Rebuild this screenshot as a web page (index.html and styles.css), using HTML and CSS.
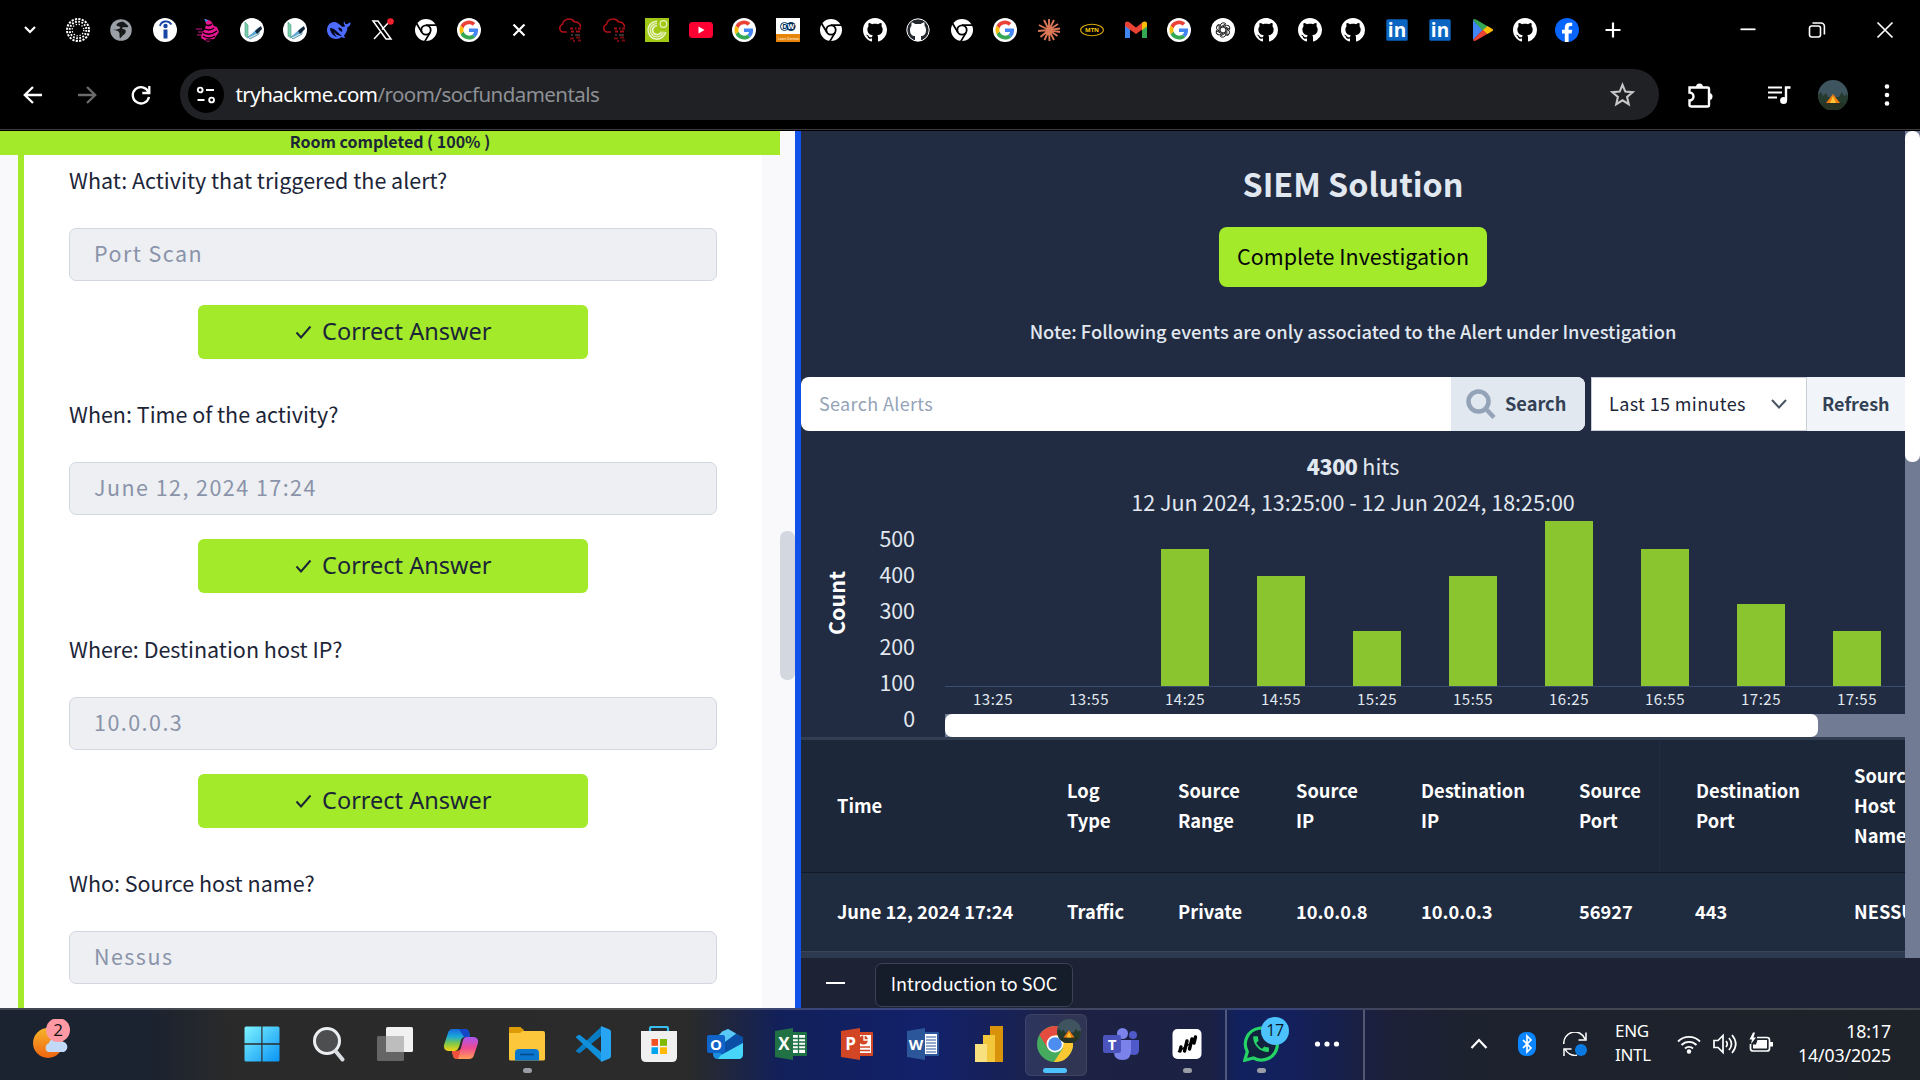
FILE: index.html
```html
<!DOCTYPE html>
<html lang="en">
<head>
<meta charset="utf-8">
<title>SOC Fundamentals</title>
<link rel="stylesheet" href="styles.css">
</head>
<body>
<svg class="defs" aria-hidden="true">
  <symbol id="google" viewBox="0 0 48 48"><circle cx="24" cy="24" r="24" fill="#fff"/><g transform="translate(5 5) scale(.79)"><path fill="#EA4335" d="M24 9.5c3.54 0 6.71 1.22 9.21 3.6l6.85-6.85C35.9 2.38 30.47 0 24 0 14.62 0 6.51 5.38 2.56 13.22l7.98 6.19C12.43 13.72 17.74 9.5 24 9.5z"/><path fill="#4285F4" d="M46.98 24.55c0-1.57-.15-3.09-.38-4.55H24v9.02h12.94c-.58 2.96-2.26 5.48-4.78 7.18l7.73 6c4.51-4.18 7.09-10.36 7.09-17.65z"/><path fill="#FBBC05" d="M10.53 28.59c-.48-1.45-.76-2.99-.76-4.59s.27-3.14.76-4.59l-7.98-6.19C.92 16.46 0 20.12 0 24c0 3.88.92 7.54 2.56 10.78l7.97-6.19z"/><path fill="#34A853" d="M24 48c6.48 0 11.93-2.13 15.89-5.81l-7.73-6c-2.15 1.45-4.92 2.3-8.16 2.3-6.26 0-11.57-4.22-13.47-9.91l-7.98 6.19C6.51 42.62 14.62 48 24 48z"/></g></symbol>
  <symbol id="github" viewBox="0 0 16 16"><path fill="#fff" d="M8 0C3.58 0 0 3.58 0 8c0 3.54 2.29 6.53 5.47 7.59.4.07.55-.17.55-.38 0-.19-.01-.82-.01-1.49-2.01.37-2.53-.49-2.69-.94-.09-.23-.48-.94-.82-1.13-.28-.15-.68-.52-.01-.53.63-.01 1.08.58 1.23.82.72 1.21 1.87.87 2.33.66.07-.52.28-.87.51-1.07-1.78-.2-3.64-.89-3.64-3.95 0-.87.31-1.59.82-2.15-.08-.2-.36-1.02.08-2.12 0 0 .67-.21 2.2.82.64-.18 1.32-.27 2-.27s1.36.09 2 .27c1.53-1.04 2.2-.82 2.2-.82.44 1.1.16 1.92.08 2.12.51.56.82 1.27.82 2.15 0 3.07-1.87 3.75-3.65 3.95.29.25.54.73.54 1.48 0 1.07-.01 1.93-.01 2.2 0 .21.15.46.55.38A8.01 8.01 0 0 0 16 8c0-4.42-3.58-8-8-8z"/></symbol>
  <symbol id="chromemono" viewBox="0 0 24 24"><circle cx="12" cy="12" r="11" fill="#fff"/><circle cx="12" cy="12" r="5.6" fill="#000"/><circle cx="12" cy="12" r="3.8" fill="#fff"/><path d="M12 7.2h10.6M7.9 14.4L2.4 5.2M16.2 14.4l-5.4 9" stroke="#000" stroke-width="1.8" fill="none"/></symbol>
  <symbol id="linkedin" viewBox="0 0 24 24"><rect x="1.3" y="1.3" width="21.4" height="21.4" rx="1.5" fill="#0a66c2"/><text x="12" y="18.6" text-anchor="middle" class="glyph" font-size="19" fill="#fff">in</text></symbol>
  <symbol id="read" viewBox="0 0 24 24"><circle cx="12" cy="12" r="12" fill="#fff"/><path d="M5 4v14l3 2V7z" fill="#7ecfa8" stroke="#3b9a8c" stroke-width=".6"/><path d="M8 19l11-7v4l-9 5z" fill="#cfe9d8" stroke="#3b82b0" stroke-width=".8"/><path d="M9 18L19 9l3 1-4 5-8 4z" fill="#5fa8d8"/><path d="M15 13l6-5 1 3-5 5z" fill="#142536"/></symbol>
  <symbol id="thm" viewBox="0 0 24 24"><path d="M9 14H4.500a4 4 0 0 1 0-7.600A6.500 6 0 0 1 16.500 4a5 5 0 0 1 6 5" stroke="#b01116" stroke-width="1.5" fill="none"/><path d="M12 10.500h3M17 10.500h1.500M20 10.500h3M13 13.500h3M18 13.500h4" stroke="#a01015" stroke-width="2" fill="none"/><path d="M13 17h2M17 17h5" stroke="#333" stroke-width="2"/><path d="M12 20.500h4M18 19.500h4M15 23h2M20 22.500h3" stroke="#780b10" stroke-width="1.800"/></symbol>
  <symbol id="camp" viewBox="0 0 30 30"><circle cx="15" cy="15" r="15" fill="#3e5560"/><path d="M0 15l3-3 2 4 3-3 2 4h11l3-5 2 4 3-2 1 4A15 15 0 0 1 .3 18z" fill="#243b2e"/><path d="M3 24a15 15 0 0 0 24 0c-4-3-20-3-24 0z" fill="#263223"/><path d="M15 14l-7 9h14z" fill="#f07b12"/><path d="M15 16l-3 7h6z" fill="#ffc531"/></symbol>
</svg>

<header class="browser">
  <div class="tabs">
    <svg class="chev" viewBox="0 0 24 24"><path d="M7 9l5 5 5-5" class="line w2"/></svg>
    <div class="favs first">
      <svg viewBox="0 0 24 24"><g fill="none" stroke="#fff"><circle cx="12" cy="12" r="11" stroke-width="2" stroke-dasharray="2.200 1.256"/><circle cx="12" cy="12" r="8.300" stroke-width="1.900" stroke-dasharray="1.800 1.459"/><circle cx="12" cy="12" r="5.800" stroke-width="1.300" stroke-dasharray="1.300 1.737"/></g></svg>
      <svg viewBox="0 0 24 24"><circle cx="12" cy="12" r="10.800" fill="#9aa0a6"/><path d="M14 3.500c-3 .5-6.500 1.500-6.500 3.500 0 1.500 2.500 1 3.500 2s-1 2-3 2.500l-5 .5c2 0 5 0 6.500 1.500s1 3 1 5l.5 2c1-1 2-2.500 4-4s2.500-4.500.5-5-3-1-2-2 4 .5 5.500-.5S16 5 14 3.500z" fill="#17191b"/></svg>
      <svg viewBox="0 0 24 24"><circle cx="12" cy="12" r="12" fill="#fff"/><circle cx="12.500" cy="8" r="2.200" fill="#1846a5"/><path d="M10.500 11.500h4v9h-4z" fill="#1846a5"/><path d="M7 8c1-5 8-6.500 11.500-1.500" fill="none" stroke="#1846a5" stroke-width="1.800"/></svg>
      <svg viewBox="0 0 24 24"><path d="M9 1l6 2 3 5 3 1 2 5-5 7-6 3-7-4 1-5 3-4 1-5z" fill="#e5168f"/><path d="M8 6q5 3 8 0M7 10q6 4 11 0M6 14q7 5 15-1M7 18q6 4 12 0M10 22h7" stroke="#000" stroke-width="1.300" fill="none"/><path d="M0 11h6M2 14h5M1 17h5" stroke="#d0148a"/><path d="M8 1l4 1-2 2z" fill="#1da1f2"/></svg>
      <svg><use href="#read"/></svg>
      <svg><use href="#read"/></svg>
      <svg viewBox="0 0 24 24"><path fill="#4d6bfe" d="M23.700 4.500c-2-.2-2 1.500-4 1.700-2 0-2.500-3.500-2.500-3.500-1 2-.5 4 1 5-.7 1-1.500 1.200-3 1C13 7 11 4.500 8 4 3 3.500 0 8 0 12c0 5 4 9 9 9 3 0 4-1 5.500-2 1.500 1 3 1 4 .5-1-.7-1.500-1.500-1.500-2 2.500-2.500 3.500-6 3.500-8.500 2-.5 3-2 3.200-4.500z"/><path d="M3 10c5 0 8 5 12 8-5 0-7-3-8-4 1 3 2 4 3 5-4-1-7-5-7-9zM11 10c3-1 5 2 4 4-2-1-3-2-4-4z" fill="#05081a"/></svg>
      <svg viewBox="0 0 24 24"><path d="M3 3h5l13 18h-5z" class="line" stroke-width="1.500"/><path d="M20 3l-8 8.500M11 13.500L4 21" class="line" stroke-width="1.500"/><circle cx="20.500" cy="3.500" r="3.300" fill="#f4212e"/></svg>
      <svg><use href="#chromemono"/></svg>
      <svg><use href="#google"/></svg>
    </div>
    <svg class="tabclose" viewBox="0 0 24 24"><path d="M6.500 6.500l11 11M17.500 6.500l-11 11" class="line w2"/></svg>
    <div class="favs open">
      <svg><use href="#thm"/></svg>
      <svg><use href="#thm"/></svg>
      <svg viewBox="0 0 24 24"><rect width="24" height="24" fill="#a0c814"/><path d="M12 2.500a9.700 9.700 0 1 0 9.500 11.500l-6-.5a3.600 3.600 0 1 1-3.500-5z" fill="#e9f2c0"/><path d="M12 4.500a7.700 7.700 0 1 0 7.500 9M12 6.500a5.700 5.700 0 1 0 5.500 7" stroke="#a0c814" stroke-width=".8" fill="none"/><circle cx="18.500" cy="6" r="3.300" fill="none" stroke="#e9f2c0" stroke-width="1.200"/></svg>
      <svg viewBox="0 0 24 24"><rect y="4" width="24" height="16" rx="3.500" fill="#f03"/><path d="M9.500 8.500v7l6-3.500z" fill="#fff"/></svg>
      <svg><use href="#google"/></svg>
      <svg viewBox="0 0 24 24"><rect width="24" height="16" fill="#fff"/><rect y="16" width="24" height="8" fill="#e8860c"/><circle cx="8.500" cy="8.500" r="4" fill="#fff" stroke="#02315c" stroke-width="1"/><circle cx="15" cy="8.500" r="4.600" fill="#02315c"/><text x="6.300" y="11" class="glyph" font-size="7" fill="#02315c">D</text><text x="11.500" y="11" class="glyph" font-size="7" fill="#fff">W</text><text x="2" y="21.500" class="tiny" fill="#fff">Learn German</text></svg>
      <svg><use href="#chromemono"/></svg>
      <svg><use href="#github"/></svg>
      <svg viewBox="0 0 24 24"><circle cx="12" cy="12" r="11.200" fill="#24292f" stroke="#fff"/><path d="M9 23v-5c-3 0-5-2-5-6 0-2 .4-3 1.400-4L5.500 4.500C7 4.500 8 5 9 6h6c1-1 2-1.500 3.500-1.500L18.600 8c1 1 1.400 2 1.400 4 0 4-2 6-5 6v5z" fill="#fff"/></svg>
      <svg><use href="#chromemono"/></svg>
      <svg><use href="#google"/></svg>
      <svg viewBox="0 0 24 24"><path d="M12 12L12 1M12 12L17 2M12 12L21 6M12 12L23 10.500M12 12L23 14M12 12L20.500 18M12 12L17 22M12 12L12.500 23M12 12L7.500 22M12 12L3.500 19M12 12L1 13M12 12L2 7M12 12L7 2" stroke="#d97757" stroke-width="1.900" fill="none"/></svg>
      <svg viewBox="0 0 24 24"><ellipse cx="12" cy="12" rx="11.400" ry="5.800" fill="#000" stroke="#d5a500" stroke-width="1.100"/><text x="12" y="14.300" text-anchor="middle" class="glyph" font-size="6" fill="#ffcb05">MTN</text></svg>
      <svg viewBox="0 0 24 24"><path d="M1 20V6l5 4v10H2.500Q1 20 1 20z" fill="#4285f4"/><path d="M23 20V6l-5 4v10h3.500Q23 20 23 20z" fill="#34a853"/><path d="M1 6c0-3 2.500-3 4-2l7 5.500L19 4v7l-7 5-7-5-4-3z" fill="#ea4335"/><path d="M18 5c2-2 5-2 5 1v2.500L18 12z" fill="#fbbc04"/></svg>
      <svg><use href="#google"/></svg>
      <svg viewBox="0 0 24 24"><circle cx="12" cy="12" r="12" fill="#fff"/><g fill="none" stroke="#000" stroke-width=".9"><path id="petal" d="M9.200 13.600V8a3.200 3.200 0 0 1 5.600-2.100L9.900 8.700"/><use href="#petal" transform="rotate(60 12 12)"/><use href="#petal" transform="rotate(120 12 12)"/><use href="#petal" transform="rotate(180 12 12)"/><use href="#petal" transform="rotate(240 12 12)"/><use href="#petal" transform="rotate(300 12 12)"/></g></svg>
      <svg><use href="#github"/></svg>
      <svg><use href="#github"/></svg>
      <svg><use href="#github"/></svg>
      <svg><use href="#linkedin"/></svg>
      <svg><use href="#linkedin"/></svg>
      <svg viewBox="0 0 24 24"><path d="M2 2v20l10-10z" fill="#4285f4"/><path d="M2 2Q3 .5 5 1.500L17 8.500 12 13z" fill="#34a853"/><path d="M2 22q1 1.500 3 .5l12-7-5-4z" fill="#ea4335"/><path d="M12 12l4.500-4 5 3q1.500 1 0 2l-5 3z" fill="#fbbc04"/></svg>
      <svg><use href="#github"/></svg>
      <svg viewBox="0 0 24 24"><circle cx="12" cy="12" r="12" fill="#0866ff"/><path d="M9.800 24v-8.600H7v-3.600h2.800V9.700q0-5 4.700-5h2.700v3.300h-1.700q-1.900 0-1.900 2v1.800h3.600l-.6 3.600h-3V24z" fill="#fff"/></svg>
    </div>
    <svg class="newtab" viewBox="0 0 24 24"><path d="M12 4.500v15M4.500 12h15" class="line w2"/></svg>
    <div class="winbtns">
      <svg viewBox="0 0 24 24"><path d="M4.500 11.300h15" class="line" stroke-width="1.800"/></svg>
      <svg viewBox="0 0 24 24"><rect x="4.500" y="8" width="11" height="11" rx="2.200" class="line" stroke-width="1.600"/><path d="M7.500 5h8.500a3.400 3.400 0 0 1 3.400 3.400v8" class="line" stroke-width="1.600"/></svg>
      <svg viewBox="0 0 24 24"><path d="M4.500 4.500l15 15M19.500 4.500l-15 15" class="line" stroke-width="1.700"/></svg>
    </div>
  </div>

  <div class="toolbar">
    <div class="nav">
      <svg viewBox="0 0 24 24"><path d="M21 12H4M12 4l-8.200 8L12 20" class="line" stroke-width="2.300"/></svg>
      <svg class="dim" viewBox="0 0 24 24"><path d="M3 12h17M12 4l8.200 8L12 20" class="line" stroke-width="2.300"/></svg>
      <svg viewBox="0 0 24 24"><path d="M19.500 9A8.200 8.200 0 1 0 20 14M20.300 3v7h-7" class="line" stroke-width="2.300"/></svg>
    </div>
    <div class="omnibox">
      <span class="site"><svg viewBox="0 0 20 20"><circle cx="4.200" cy="5" r="2.400" class="line" stroke-width="1.900"/><path d="M10 5h8M1.500 15h7" class="line" stroke-width="2"/><circle cx="15.600" cy="15" r="2.400" class="line" stroke-width="1.900"/></svg></span>
      <span class="url"><b>tryhackme.com</b>/room/socfundamentals</span>
      <svg class="star" viewBox="0 0 24 24"><path d="M12 2.700l2.700 6.500 7 .6-5.300 4.600 1.600 6.900-6-3.700-6 3.700 1.600-6.900-5.300-4.600 7-.6z" fill="none" stroke="#c7c7c7" stroke-width="2"/></svg>
    </div>
    <div class="tools">
      <svg viewBox="0 0 28 28"><path d="M3.500 6.500h18q1.500 0 1.500 1.500v16q0 1.500-1.500 1.500h-16q-2 0-2-1.500v-4.500a4 4 0 0 0 0-8z" class="line" stroke-width="2.400"/><path d="M10 6a3.500 3.500 0 0 1 7 0zM23 12a3 3 0 0 1 0 7z" fill="#fff"/></svg>
      <svg viewBox="0 0 24 24"><path d="M1 4.500h14M1 9.500h14M1 14.500h9" class="line" stroke-width="2"/><path d="M19 17V4.500h4.500" class="line" stroke-width="2.400"/><circle cx="16.600" cy="17.500" r="3.500" fill="#fff"/></svg>
      <svg><use href="#camp"/></svg>
      <svg viewBox="0 0 28 28"><circle cx="14" cy="5.500" r="2.300" fill="#fff"/><circle cx="14" cy="14" r="2.300" fill="#fff"/><circle cx="14" cy="22.500" r="2.300" fill="#fff"/></svg>
    </div>
  </div>
</header>

<main class="page">
  <section class="room">
    <div class="roombody">
      <div class="banner">Room completed ( 100% )</div>
      <div class="task">
        <div class="qa"><p>What: Activity that triggered the alert?</p><div class="answer">Port Scan</div><div class="correct"><svg viewBox="0 0 16 16"><path d="M1 8.500l4.500 5L15 2.500"/></svg>Correct Answer</div></div>
        <div class="qa"><p>When: Time of the activity?</p><div class="answer">June 12, 2024 17:24</div><div class="correct"><svg viewBox="0 0 16 16"><path d="M1 8.500l4.500 5L15 2.500"/></svg>Correct Answer</div></div>
        <div class="qa"><p>Where: Destination host IP?</p><div class="answer">10.0.0.3</div><div class="correct"><svg viewBox="0 0 16 16"><path d="M1 8.500l4.500 5L15 2.500"/></svg>Correct Answer</div></div>
        <div class="qa"><p>Who: Source host name?</p><div class="answer">Nessus</div></div>
      </div>
    </div>
    <div class="roomscroll"><i></i></div>
  </section>

  <section class="site-pane">
    <div class="siem-wrap">
      <div class="siem">
        <h1>SIEM Solution</h1>
        <div class="complete">Complete Investigation</div>
        <p class="note">Note: Following events are only associated to the Alert under Investigation</p>
        <div class="controls">
          <div class="search"><span class="ph">Search Alerts</span><span class="go"><svg viewBox="0 0 30 30"><circle cx="12.500" cy="12.500" r="10" /><path d="M19.500 19.500l8.500 9"/></svg>Search</span></div>
          <div class="range"><span>Last 15 minutes</span><svg viewBox="0 0 18 12"><path d="M2 2l7 7.500L16 2"/></svg></div>
          <div class="refresh">Refresh</div>
        </div>
        <div class="hits"><b>4300</b> hits</div>
        <div class="span">12 Jun 2024, 13:25:00 - 12 Jun 2024, 18:25:00</div>
        <div class="chart">
          <div class="count"><span>Count</span></div>
          <div class="yaxis"><span>500</span><span>400</span><span>300</span><span>200</span><span>100</span><span>0</span></div>
          <div class="plot">
            <div class="bars">
              <i style="height:0"></i><i style="height:0"></i><i style="height:137px"></i><i style="height:110px"></i><i style="height:55px"></i><i style="height:110px"></i><i style="height:165px"></i><i style="height:137px"></i><i style="height:82px"></i><i style="height:55px"></i>
            </div>
            <div class="ticks"><span>13:25</span><span>13:55</span><span>14:25</span><span>14:55</span><span>15:25</span><span>15:55</span><span>16:25</span><span>16:55</span><span>17:25</span><span>17:55</span></div>
            <div class="hscroll"><i></i></div>
          </div>
        </div>
        <div class="table">
          <div class="tr th"><span>Time</span><span>Log<br>Type</span><span>Source<br>Range</span><span>Source<br>IP</span><span>Destination<br>IP</span><span>Source<br>Port</span><span class="sep">Destination<br>Port</span><span>Source<br>Host<br>Name</span></div>
          <div class="tr td"><span>June 12, 2024 17:24</span><span>Traffic</span><span>Private</span><span>10.0.0.8</span><span>10.0.0.3</span><span>56927</span><span>443</span><span>NESSUS</span></div>
        </div>
      </div>
      <div class="vscroll"><i></i></div>
    </div>
    <div class="dock"><i></i><span>Introduction to SOC</span></div>
  </section>
</main>

<footer class="taskbar">
  <div class="weather">
    <svg viewBox="0 0 40 44"><defs><linearGradient id="sun" x2="0" y2="1"><stop stop-color="#f7b52c"/><stop offset="1" stop-color="#f0640f"/></linearGradient><linearGradient id="win" x2="1" y2="1"><stop stop-color="#7df3ff"/><stop offset="1" stop-color="#0a93f5"/></linearGradient></defs><circle cx="16" cy="24" r="15" fill="url(#sun)"/><path d="M16 33a5 5 0 0 1 1-9 6 6 0 0 1 11-1 5 5 0 0 1 4 10z" fill="#c3d9f8"/><circle cx="26" cy="11" r="12" fill="#ff99a4"/><text x="26" y="17" text-anchor="middle" class="ui" font-size="17" fill="#111">2</text></svg>
  </div>
  <div class="apps">
    <div class="start"><svg viewBox="0 0 36 36"><path d="M.5 2q0-1.500 1.500-1.500h15.300v16.800H.5zM18.500.5H34q1.500 0 1.500 1.500v15.300h-17zM.5 18.700h16.800v16.800H2Q.5 35.500.5 34zM18.500 18.700h17V34q0 1.500-1.500 1.500H18.500z" fill="url(#win)"/></svg></div>
    <div><svg viewBox="0 0 36 36"><circle cx="16" cy="15" r="12.500" fill="#4c4e50" stroke="#eceff1" stroke-width="3"/><path d="M24.500 25l7 8.500" stroke="#d9dde2" stroke-width="4" stroke-linecap="round"/></svg></div>
    <div><svg viewBox="0 0 36 36"><rect x="9" y="1" width="27" height="25" rx="1.500" fill="#f1f1f1"/><rect x="0" y="10" width="27" height="25" rx="1.500" fill="#6b6b6b" fill-opacity=".9"/><rect x="9" y="10" width="18" height="16" fill="#bdbdbd"/></svg></div>
    <div><svg viewBox="0 0 36 36"><defs><linearGradient id="cpa" x2="0" y2="1"><stop stop-color="#1769e0"/><stop offset=".35" stop-color="#1ba9d8"/><stop offset=".65" stop-color="#7cc84a"/><stop offset="1" stop-color="#f5d313"/></linearGradient><linearGradient id="cpb" x2="0" y2="1"><stop stop-color="#a757f2"/><stop offset=".5" stop-color="#ee4b91"/><stop offset="1" stop-color="#ff9d55"/></linearGradient></defs><path d="M10 3h12q3 0 4 3l1 5h-5q-3 0-4 3l-2 7q-1 3-4 4H5q-5-1-4-6L5 7q1-4 5-4z" fill="url(#cpa)"/><path d="M16 3h6q3 0 4 3l1 5h-6z" fill="#1447c8"/><path d="M26 33H14q-3 0-4-3l-1-5h5q3 0 4-3l2-8q1-3 4-3h7q5 1 4 6l-4 12q-1 4-5 4z" fill="url(#cpb)"/><path d="M9 25h5q3 0 4-2l-3 10q-4 0-5-3z" fill="#f0503c"/></svg></div>
    <div class="run"><svg viewBox="0 0 36 36"><path d="M0 2.500Q0 1 1.500 1H11l4 4h19q2 0 2 2v26q0 1.500-1.500 1.500h-33Q0 34.500 0 33z" fill="#fcc73a"/><path d="M0 7V2.500Q0 1 1.500 1H11l4 3-4 3z" fill="#dd9b06"/><path d="M6 34.500V27q0-4 4-4h16q4 0 4 4v7.500z" fill="#0a77cf"/><path d="M11 28.500h14" stroke="#05498b" stroke-width="1.600"/></svg></div>
    <div><svg viewBox="0 0 36 36"><path d="M1 24.500L26 1v9L5 27q-1 .6-2-.4l-2-1z" fill="#0a7cc4"/><path d="M1 11.500L26 35v-9L5 9q-1-.6-2 .4l-2 1z" fill="#1090db"/><path d="M26 0l8.500 3.500Q36 4.200 36 6v24q0 1.800-1.500 2.500L26 36z" fill="#28a5f2"/></svg></div>
    <div><svg viewBox="0 0 36 36"><path d="M9 7V2.500Q9 1 10.500 1h15Q27 1 27 2.500V7" fill="none" stroke="#38bdf0" stroke-width="2.200"/><path d="M0 5h36v26q0 5-5 5H5q-5 0-5-5z" fill="#f0f0f0"/><path d="M10.500 13H17v6.800h-6.500z" fill="#f25022"/><path d="M19 13h7v6.800h-7z" fill="#7fba00"/><path d="M10.500 21.300H17V28h-6.500z" fill="#00a4ef"/><path d="M19 21.300h7V28h-7z" fill="#ffb900"/></svg></div>
    <div><svg viewBox="0 0 36 36"><path d="M6 12L21 3l15 9v16q0 5-5 5H11q-5 0-5-5z" fill="#1a8fe0"/><path d="M15 5.500L21 3l8 4.500L10 22V12z" fill="#5ac8f5"/><path d="M36 11v6L16 30l-6-8L29 8z" fill="#0a4fa5"/><path d="M36 17v11q0 5-5 5H11l3-4z" fill="#47d5fa"/><rect y="9" width="18" height="18" rx="2" fill="#0f63c9"/><text x="9" y="23.500" text-anchor="middle" class="ui bold" font-size="15" fill="#fff">O</text></svg></div>
    <div><svg viewBox="0 0 36 36"><rect x="17" y="6" width="17" height="24" rx="1" fill="#1e7145"/><path d="M19 9h13v18H19z" fill="#fff"/><path d="M19 12.500h13M19 16h13M19 19.500h13M19 23h13M25.500 9v18" stroke="#1e7145" stroke-width="1.300"/><path d="M2 5l18-3v32L2 31z" fill="#207245"/><text x="11" y="24" text-anchor="middle" class="ui bold" font-size="17" fill="#fff">X</text></svg></div>
    <div><svg viewBox="0 0 36 36"><rect x="17" y="6" width="17" height="24" rx="1" fill="#d24726"/><path d="M19 9h13v18H19z" fill="#fff"/><circle cx="24.500" cy="14" r="4.500" fill="#d24726"/><path d="M25 9v5h5" stroke="#fff" stroke-width="1.300" fill="none"/><path d="M20 21h11M20 24.500h11" stroke="#d24726" stroke-width="1.400"/><path d="M2 5l19-3v32L2 31z" fill="#d24625"/><text x="11.500" y="24" text-anchor="middle" class="ui bold" font-size="17" fill="#fff">P</text></svg></div>
    <div><svg viewBox="0 0 36 36"><rect x="17" y="6" width="17" height="24" rx="1" fill="#2b579a"/><path d="M19 8h13v20H19z" fill="#fff"/><path d="M21 11h10M21 14h10M21 17h10M21 20h10M21 23h10M21 26h10" stroke="#2b579a" stroke-width="1.200"/><path d="M2 5l18-3v32L2 31z" fill="#2b579a"/><text x="11" y="23.500" text-anchor="middle" class="ui bold" font-size="15" fill="#fff">W</text></svg></div>
    <div><svg viewBox="0 0 36 36"><path d="M19 0h13v36H19z" fill="#d9930b"/><path d="M12 9h12v27H12z" fill="#f2c73c"/><path d="M4 18h12v18H4z" fill="#f8e07f"/></svg></div>
    <div class="active"><svg viewBox="0 0 36 36"><circle cx="18" cy="18" r="18" fill="#34a34f"/><path d="M18 18L2.500 9A18 18 0 0 1 33.600 9z" fill="#e33b2e"/><path d="M2.500 9L11 23l7-5V9z" fill="#e33b2e"/><path d="M33.600 9A18 18 0 0 1 17 36l9-14-8-13z" fill="#fcc31e"/><circle cx="18" cy="18" r="8.500" fill="#fff"/><circle cx="18" cy="18" r="6.800" fill="#3b82ee"/></svg><svg class="mini"><use href="#camp"/></svg></div>
    <div><svg viewBox="0 0 36 36"><circle cx="19.500" cy="7.500" r="5.500" fill="#7b83eb"/><circle cx="30" cy="9" r="4" fill="#5059c9"/><path d="M25 14h11v10q0 5-5 5-4 0-6-3z" fill="#5059c9"/><path d="M12 14h16v11q0 9-8.500 9T11 26z" fill="#7b83eb"/><rect y="9" width="18" height="18" rx="2" fill="#4b53bc"/><text x="9" y="23.500" text-anchor="middle" class="ui bold" font-size="15" fill="#fff">T</text></svg></div>
    <div class="run"><svg viewBox="0 0 36 36"><rect x="3.500" y="3" width="29" height="30" rx="5" fill="#fff"/><path d="M11 25l1-4M15.500 25l2.500-10M20.500 23l2.500-10M25 17l1.500-6" stroke="#000" stroke-width="3.400" stroke-linecap="round"/><path d="M9 26l17-12" stroke="#000" stroke-width="1.500"/></svg></div>
  </div>
  <div class="pinned">
    <div class="run"><svg viewBox="0 0 36 36"><path d="M1.800 34.200l2.500-8.500A16 16 0 1 1 10.500 32z" fill="#12233f" stroke="#25d366" stroke-width="3.200"/><path transform="translate(7.500 7.500) scale(.88)" fill="#25d366" d="M6.620 10.790c1.440 2.830 3.760 5.140 6.590 6.590l2.200-2.200c.27-.27.67-.36 1.020-.24 1.120.37 2.330.57 3.570.57.55 0 1 .45 1 1V20c0 .55-.45 1-1 1-9.390 0-17-7.610-17-17 0-.55.45-1 1-1h3.500c.55 0 1 .45 1 1 0 1.250.2 2.450.57 3.570.11.35.03.74-.25 1.020l-2.200 2.200z"/></svg><span class="badge">17</span></div>
    <div><svg viewBox="0 0 36 36"><g fill="#fff"><circle cx="8.500" cy="18" r="2.600"/><circle cx="18" cy="18" r="2.600"/><circle cx="27.500" cy="18" r="2.600"/></g></svg></div>
  </div>
  <div class="tray">
    <svg viewBox="0 0 24 24"><path d="M4.500 16l7.500-8 7.500 8" class="line w2"/></svg>
    <svg class="bt" viewBox="0 0 24 24"><rect x="3" width="18" height="24" rx="8" fill="#0a84ff"/><path d="M8 8l8 8-4 4V4l4 4-8 8" class="line" stroke-width="1.700"/></svg>
    <svg class="sync" viewBox="0 0 24 24"><path d="M.8 12A11 11 0 0 1 22 7M23 .5V8h-7.500M14 23.200A11 11 0 0 1 2 17M1 24v-7h7.500" class="line" stroke-width="1.500"/><circle cx="18" cy="18" r="6" fill="#0a7ae0"/></svg>
    <div class="lang">ENG<br>INTL</div>
    <svg class="wifi" viewBox="0 0 24 24"><path d="M1 9.500a15.500 15.500 0 0 1 22 0M4.500 13a10.500 10.500 0 0 1 15 0M8 16.500a5.600 5.600 0 0 1 8 0" class="line" stroke-width="1.800"/><circle cx="12" cy="19.500" r="2.200" fill="#fff"/></svg>
    <svg class="vol" viewBox="0 0 24 24"><path d="M1 8.500h4l5-5v17l-5-5H1zM13 9q2.500 3 0 6M16 6q5 6 0 12M19 3q7.500 9 0 18" class="line" stroke-width="1.700"/></svg>
    <svg class="bat" viewBox="0 0 24 24"><path d="M8 5.500h10q2.500 0 2.500 2.500v8.500q0 2.500-2.500 2.500H4q-2.500 0-2.500-2.500V12" class="line" stroke-width="1.700"/><path d="M8.500 8H18v8.500H4V12.500h3zM21 10h3v4.500h-3zM4 .5L.5 7.500H3L2 12l5-6.500H4.500L6 .5z" fill="#fff"/></svg>
    <div class="clock">18:17<br>14/03/2025</div>
  </div>
</footer>
</body>
</html>
```
FILE: styles.css
```css
* { box-sizing: border-box; }

body {
  margin: 0;
  width: 1920px;
  height: 1080px;
  overflow: hidden;
  display: flex;
  flex-direction: column;
  background: #000;
  font-family: "Noto Sans CJK SC", "Noto Sans", sans-serif;
}

svg { display: block; flex: none; }
p, h1 { margin: 0; }
.defs { width: 0; height: 0; position: absolute; }
.line { fill: none; stroke: #fff; }
.w2 { stroke-width: 2.2; }
.glyph { font-family: "Open Sans", sans-serif; font-weight: 700; }
.tiny { font-family: "Open Sans", sans-serif; font-size: 3.2px; }
.ui { font-family: "Open Sans", sans-serif; }
.bold { font-weight: 700; }

/* Browser chrome */
.browser { height: 131px; flex: none; border-bottom: 1px solid #000; box-shadow: inset 0 -1px #3c3c3c; }
.tabs { height: 60px; display: flex; align-items: center; padding-left: 18px; }
.tabs svg { width: 24px; height: 24px; }
.favs { display: flex; flex: none; width: 1040px; }
.favs.first { width: 434.5px; margin-left: 14.3px; }
.favs.first > svg { margin: 0 9.725px; }
.favs.open > svg { margin: 0 9.76px; }
.favs.open > svg:nth-child(n+22) { margin: 0 9.1px; }
.tabs .tabclose { margin: 0 17.5px 0 16px; }
.tabs .newtab { margin-left: 13px; }
.winbtns { display: flex; gap: 44.5px; margin-left: 111px; }

.toolbar { height: 69px; display: flex; align-items: center; padding-left: 21px; }
.nav { display: flex; flex: none; gap: 30px; width: 159px; }
.nav svg { width: 24px; height: 24px; }
.dim { opacity: .42; }
.omnibox { width: 1479px; flex: none; height: 51px; border-radius: 26px; background: #202124; display: flex; align-items: center; padding: 0 24px 0 8px; }
.site { width: 36px; height: 37px; border-radius: 50%; background: #000; display: grid; place-items: center; }
.site svg { width: 20px; height: 20px; }
.url { margin: -1px 0 0 11.5px; flex: 1; font: 20.5px/30px "Noto Sans", sans-serif; color: #8d9095; letter-spacing: -.54px; white-space: nowrap; }
.url b { font-weight: 400; color: #fff; }
.star { width: 25px; height: 25px; }
.tools { display: flex; flex: none; align-items: center; margin-left: 27px; }
.tools svg { width: 28px; height: 28px; }
.tools svg:nth-child(2) { width: 24px; height: 24px; margin: 0 27px 0 53px; }
.tools svg:nth-child(3) { width: 30px; height: 30px; margin-right: 25px; }

/* Room content */
.page { height: 877px; flex: none; display: flex; }
.room { width: 801px; display: flex; background: #f9f9fb; border-right: 6px solid #1153e8; }
.roombody { width: 780px; }
.banner { height: 24px; background: #a3ea2a; text-align: center; font-size: 16px; line-height: 20px; font-weight: 700; color: #1c2538; }
.task { margin: 0 18px; height: 853px; background: #fff; border-left: 6px solid #a3ea2a; padding: 6px 45px 0; overflow: hidden; }
.qa { height: 234.33px; color: #1c2538; font-size: 21.5px; }
.qa p { line-height: 37.4px; height: 37px; }
.answer { margin-top: 30px; height: 53px; border: 1px solid #d3d8e0; border-radius: 7px; background: #edeff3; color: #8a93a9; letter-spacing: 1.45px; line-height: 48.4px; padding-left: 24px; }
.correct { width: 390px; height: 54px; margin: 24px auto 0; padding-bottom: 2px; border-radius: 6px; background: #a3ea2a; display: flex; align-items: center; justify-content: center; gap: 10.5px; font: 23.5px/50px "Noto Sans", sans-serif; color: #1c2538; }
.correct svg { width: 17px; height: 16px; margin-top: 2px; fill: none; stroke: #1c2538; stroke-width: 2; }
.roomscroll { width: 15px; padding-top: 400px; }
.roomscroll i { display: block; height: 149px; border-radius: 7px; background: #d3d8e0; }

/* SIEM pane */
.site-pane { width: 1119px; background: #212c42; }
.siem-wrap { height: 827px; display: flex; }
.siem { width: 1104px; overflow: hidden; color: #e1e8f0; display: flex; flex-direction: column; align-items: center; }
.siem h1 { margin-top: 28px; font-size: 32.3px; line-height: 48px; font-weight: 700; }
.complete { margin-top: 20px; width: 268px; height: 60px; border-radius: 8px; background: #a3ea2a; color: #05070c; text-align: center; font-size: 21.5px; line-height: 58px; white-space: nowrap; }
.note { margin-top: 29px; font-size: 18.32px; line-height: 30px; font-weight: 500; }
.controls { width: 1104px; height: 54px; margin-top: 31px; display: flex; font-size: 18px; line-height: 52px; white-space: nowrap; }
.search { width: 784px; display: flex; border-radius: 8px; overflow: hidden; background: #fff; margin-right: 6px; }
.ph { width: 650px; padding-left: 18px; color: #94a3b8; letter-spacing: .35px; }
.go { width: 134px; background: #e1e8f0; display: flex; align-items: center; padding: 0 0 2px 15px; gap: 9px; font-weight: 700; font-size: 18.2px; color: #334155; }
.go svg { width: 30px; height: 30px; margin-top: 2px; fill: none; stroke: #94a3b8; stroke-width: 4.5; }
.range { width: 216px; border: 1px solid #c9ced6; background: #fff; color: #1c2538; display: flex; align-items: center; justify-content: space-between; padding: 0 18px 0 17px; letter-spacing: .38px; }
.range span { margin-top: -2px; }
.range svg { width: 18px; height: 12px; fill: none; stroke: #4b5563; stroke-width: 2; }
.refresh { width: 98px; padding-left: 15px; background: #f1f5f9; color: #334155; font-weight: 700; }
.hits { margin-top: 17px; font-size: 21.5px; line-height: 36px; }
.hits b { font-weight: 900; letter-spacing: -.4px; }
.span { font-size: 21.5px; line-height: 36px; white-space: nowrap; }

.chart { width: 1104px; height: 217px; display: flex; }
.count { width: 72px; display: grid; place-items: center; padding: 0 2px 51px 0; }
.count span { writing-mode: vertical-rl; transform: rotate(180deg); font-weight: 700; font-size: 21.5px; line-height: 30px; color: #fff; }
.yaxis { width: 42px; display: flex; flex-direction: column; text-align: right; font-size: 21.4px; line-height: 36px; }
.plot { width: 960px; margin-left: 30px; padding-top: 1px; }
.bars { height: 166px; border-bottom: 1px solid #3b4d74; display: flex; align-items: flex-end; }
.bars i { width: 48px; margin: 0 24px; background: #8ac42f; }
.ticks { display: flex; height: 27px; line-height: 24px; font-size: 15px; letter-spacing: .5px; }
.ticks span { width: 96px; text-align: center; }
.hscroll { height: 23px; background: #717b93; }
.hscroll i { display: block; width: 873px; height: 23px; border-radius: 7px; background: #fff; }

.table { width: 1104px; border-top: 3px solid #323f53; overflow: hidden; color: #fff; font-size: 18.25px; line-height: 30px; font-weight: 700; background: #2d394f; height: 221px; }
.tr { display: grid; grid-template-columns: 230px 111px 118px 125px 158px 116px 159px 160px; white-space: nowrap; }
.tr span { padding: 0 0 2px 36px; display: flex; align-items: center; }
.th { height: 133px; background: #1d273a; border-bottom: 1px solid #111827; }
.th .sep { border-left: 1px solid #232e42; }
.td { height: 79px; background: #1f2b3f; border-bottom: 1px solid #3a4558; }

.vscroll { width: 15px; background: #717b93; }
.vscroll i { display: block; height: 331px; border-radius: 7px; background: #fff; }

.dock { height: 50px; background: #1d2335; display: flex; align-items: center; padding: 2px 0 0 25px; gap: 30px; }
.dock i { width: 19px; height: 2px; background: #fff; margin-top: -2px; }
.dock span { width: 198px; height: 44px; margin-top: 1px; border: 1px solid #394256; border-radius: 7px; background: #151c2a; color: #fff; text-align: center; font-size: 18px; line-height: 38px; }

/* Windows taskbar */
.taskbar { height: 72px; flex: none; display: flex; border-top: 2px solid rgba(255,255,255,.17); background: linear-gradient(90deg, #1b2330 0, #1b2330 150px, #2a2a2a 230px, #2a2b2a 690px, #12205a 780px, #12216a 930px, #1d2244 1070px, #1b2142 1210px, #11215f 1240px, #13205c 1290px, #1c2038 1390px, #1c222e 1470px, #1e2229 100%); background-origin: border-box; }
.weather { width: 230px; flex: none; padding: 7px 0 0 32px; }
.weather svg { width: 40px; height: 44px; margin-top: 2px; }
.apps { display: flex; flex: none; width: 995px; }
.apps > div, .pinned > div { width: 66px; flex: none; height: 68px; display: grid; place-items: center; position: relative; }
.apps > .start { padding-right: 3px; }
.apps > div > svg:first-child, .pinned svg { width: 36px; height: 36px; }
.run::after { content: ""; position: absolute; left: 29px; bottom: 5px; width: 9px; height: 5px; border-radius: 3px; background: #9a9ca6; }
.active::before { content: ""; position: absolute; left: 3px; top: 4px; width: 60px; height: 60px; border-radius: 6px; background: rgba(255,255,255,.09); border: 1px solid rgba(255,255,255,.07); }
.active::after { content: ""; position: absolute; left: 21px; bottom: 5px; width: 24px; height: 5px; border-radius: 3px; background: #4cc2ff; }
.apps .mini { position: absolute; left: 35px; top: 9px; width: 24px; height: 24px; }
.pinned { width: 140px; flex: none; display: flex; padding-left: 1px; border: solid rgba(255,255,255,.25); border-width: 0 2px; }
.badge { position: absolute; left: 33px; top: 7px; width: 28px; height: 28px; border-radius: 50%; background: #4cc2ff; color: #0b1626; text-align: center; font: 16px/27px "Open Sans", sans-serif; letter-spacing: -.5px; }
.tray { display: flex; align-items: center; padding-left: 102px; color: #fff; font: 17px/24px "Noto Sans", sans-serif; height: 68px; }
.tray svg { width: 24px; height: 24px; }
.tray .bt { margin: 0 24px; }
.lang { width: 48px; margin: -2px 14px 0 28px; letter-spacing: -.3px; }
.tray .vol { margin: 0 12px; }
.clock { width: 105px; margin: -2px 0 0 13px; text-align: right; font-size: 17.7px; letter-spacing: -.1px; }
```
